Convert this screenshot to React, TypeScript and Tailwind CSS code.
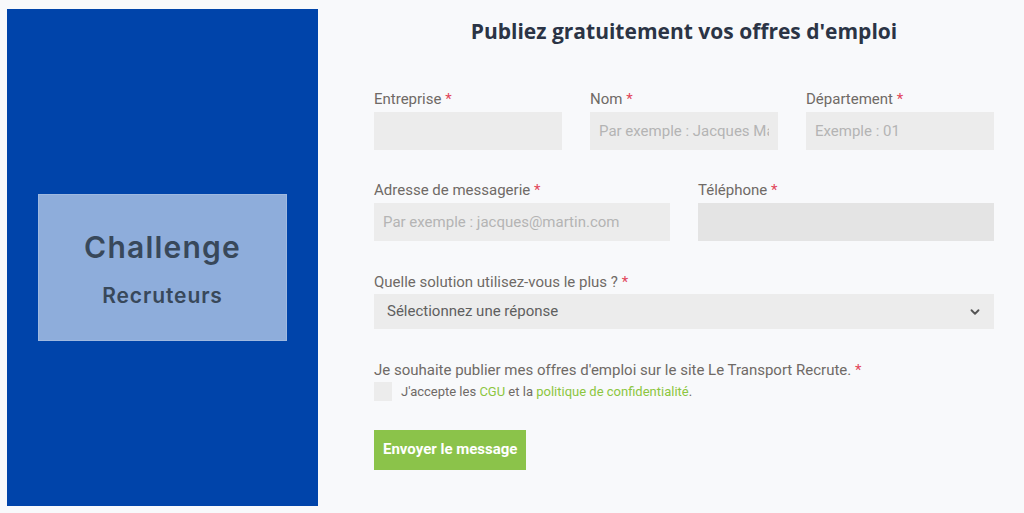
import { ChevronDown } from 'lucide-react';

const Req = () => <span className="text-[#e2455a]"> *</span>;

function Field({ label, placeholder }: { label: string; placeholder?: string }) {
  return (
    <div className="flex flex-col">
      <label className="text-[15px] leading-[20px] text-[#6f6a66] mb-[3px]">
        {label}
        <Req />
      </label>
      <input
        className="h-[38px] w-full bg-[#ececec] px-[9px] text-[15px] text-[#555] placeholder:text-[#b4b4b4] outline-none"
        placeholder={placeholder}
      />
    </div>
  );
}

export default function App() {
  return (
    <div
      className="flex min-h-[513px] w-[1024px] bg-[#f8f9fb]"
      style={{ fontFamily: 'Roboto, "Liberation Sans", sans-serif' }}
    >
      <div className="ml-[7px] mt-[9px] flex h-[497px] w-[311px] shrink-0 items-center justify-center bg-[#0044aa] pt-[20px]">
        <div
          className="flex h-[147px] w-[249px] flex-col items-center justify-center border border-[#9fb9e0] bg-[#8eaddb] text-[#38485a]"
          style={{ fontFamily: 'Inter, sans-serif' }}
        >
          <div className="mt-[2px] text-[30px] font-semibold leading-[34px] tracking-[1.2px]">Challenge</div>
          <div className="mt-[20px] text-[21px] font-semibold leading-[24px] tracking-[0.9px]">Recruteurs</div>
        </div>
      </div>

      <div className="ml-[56px] w-[620px]">
        <h1
          className="mt-[17px] text-center text-[21px] font-bold leading-[28px] text-[#2b3445]"
          style={{ fontFamily: '"Open Sans", sans-serif' }}
        >
          Publiez gratuitement vos offres d'emploi
        </h1>

        <div className="mt-[44px] grid grid-cols-3 gap-x-[28px]">
          <Field label="Entreprise" />
          <Field label="Nom" placeholder="Par exemple : Jacques Martin" />
          <Field label="Département" placeholder="Exemple : 01" />
        </div>

        <div className="mt-[30px] grid grid-cols-2 gap-x-[28px]">
          <Field label="Adresse de messagerie" placeholder="Par exemple : jacques@martin.com" />
          <div className="flex flex-col">
            <label className="mb-[3px] text-[15px] leading-[20px] text-[#6f6a66]">
              Téléphone
              <Req />
            </label>
            <input className="h-[38px] w-full bg-[#e4e4e4] px-[9px] text-[15px] outline-none" />
          </div>
        </div>

        <div className="mt-[31px] flex flex-col">
          <label className="mb-[2px] text-[15px] leading-[20px] text-[#6f6a66]">
            Quelle solution utilisez-vous le plus ?
            <Req />
          </label>
          <div className="flex h-[35px] items-center justify-between bg-[#ececec] pl-[13px] pr-[12px] text-[15px] text-[#5f5f5f]">
            <span>Sélectionnez une réponse</span>
            <ChevronDown size={14} strokeWidth={3.2} className="text-[#555]" />
          </div>
        </div>

        <div className="mt-[31px] text-[15px] leading-[20px] text-[#6f6a66]">
          Je souhaite publier mes offres d'emploi sur le site Le Transport Recrute.
          <Req />
        </div>
        <div className="mt-[2px] flex items-center">
          <span className="h-[19px] w-[18px] bg-[#ececec]" />
          <span className="ml-[9px] text-[13px] text-[#6f6a66]">
            J'accepte les <span className="text-[#8cc63f]">CGU</span> et la{' '}
            <span className="text-[#8cc63f]">politique de confidentialité</span>.
          </span>
        </div>

        <button className="mt-[28px] h-[40px] bg-[#8bc34a] px-[9px] text-[15px] font-bold text-white">
          Envoyer le message
        </button>
      </div>
    </div>
  );
}
